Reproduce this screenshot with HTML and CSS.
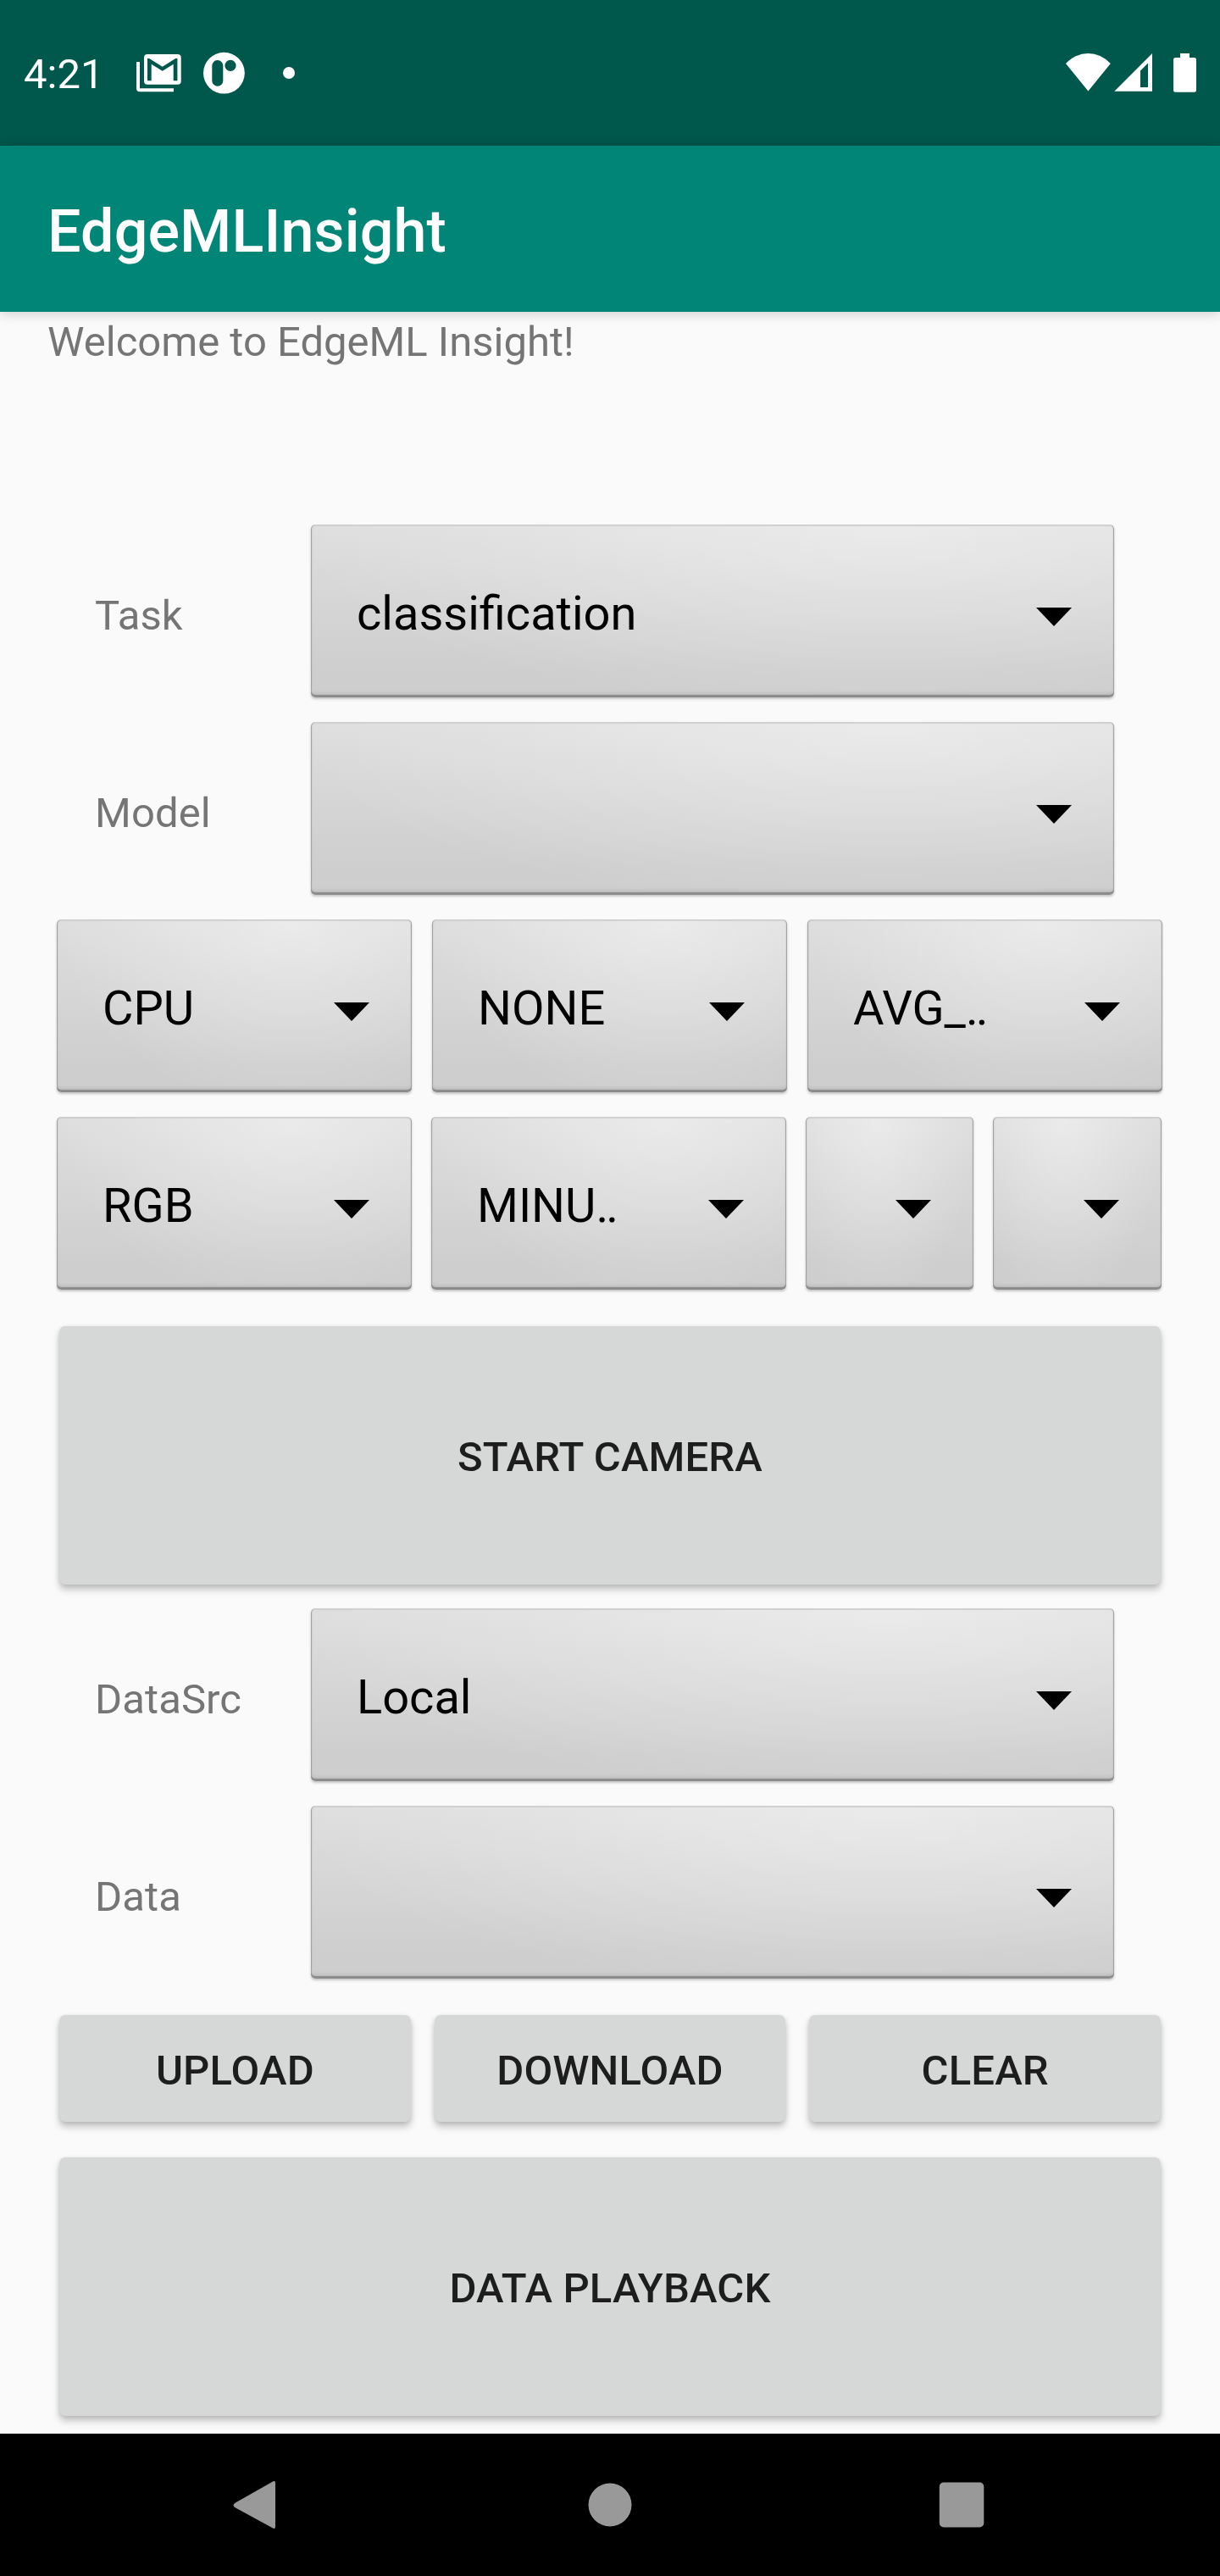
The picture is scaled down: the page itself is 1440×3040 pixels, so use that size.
FILE: index.html
```html
<!DOCTYPE html>
<html lang="en">
<head>
<meta charset="utf-8">
<title>EdgeMLInsight</title>
<link rel="stylesheet" href="styles.css">
</head>
<body>
<div class="screen">
  <header class="status">
    <span class="clock">4:21</span>
    <svg class="notifications" width="200" height="60" viewBox="160 56 200 60" fill="#fff">
      <path d="M161 73h4v31.2h40v4.1h-40q-4 0-4-4z"/>
      <path fill-rule="evenodd" d="M174 64h35.700q4 0 4 4v27.700q0 4-4 4H174q-4 0-4-4V68q0-4 4-4zM174 69v26.300h4.700V75.800l13 8 13-8v19.500h4.700V69h-2.200L191.700 78.700 176.200 69z"/>
      <circle cx="264.400" cy="86.200" r="24.400"/>
      <rect x="250.300" y="71" width="13" height="30.700" rx="6.500" fill="#00574b"/>
      <circle cx="272" cy="77.400" r="6.600" fill="#00574b"/>
      <circle cx="341" cy="86" r="7"/>
    </svg>
    <svg class="indicators" width="160" height="60" viewBox="1255 56 160 60" fill="#fff">
      <path d="M1258 75q11.500-12 26.400-12t26.400 12l-26.400 32.500z"/>
      <path fill-rule="evenodd" d="M1315.300 107.700L1360 63v44.700zM1346 103h9V74.500l-9 9z"/>
      <path d="M1393 63h11v5h5.500q2.500 0 2.500 2.500v35.700q0 2.500-2.500 2.500h-22q-2.500 0-2.500-2.500V70.500q0-2.500 2.500-2.500h5.500z"/>
    </svg>
  </header>
  <div class="appbar"><h1>EdgeMLInsight</h1></div>
  <main>
    <p class="welcome">Welcome to EdgeML Insight!</p>
    <div class="row field">
      <span class="label">Task</span>
      <button class="spinner wide">classification<i class="arrow"></i></button>
    </div>
    <div class="row field">
      <span class="label">Model</span>
      <button class="spinner wide"><i class="arrow"></i></button>
    </div>
    <div class="row thirds">
      <button class="spinner">CPU<i class="arrow"></i></button>
      <button class="spinner">NONE<i class="arrow"></i></button>
      <button class="spinner"><span>AVG_<span class="dots">..</span></span><i class="arrow"></i></button>
    </div>
    <div class="row quarters">
      <button class="spinner">RGB<i class="arrow"></i></button>
      <button class="spinner"><span>MINU<span class="dots">..</span></span><i class="arrow"></i></button>
      <button class="spinner narrow"><i class="arrow"></i></button>
      <button class="spinner narrow"><i class="arrow"></i></button>
    </div>
    <button class="btn large camera">START CAMERA</button>
    <div class="row field">
      <span class="label">DataSrc</span>
      <button class="spinner wide">Local<i class="arrow"></i></button>
    </div>
    <div class="row field">
      <span class="label">Data</span>
      <button class="spinner wide"><i class="arrow"></i></button>
    </div>
    <div class="actions">
      <button class="btn">UPLOAD</button>
      <button class="btn">DOWNLOAD</button>
      <button class="btn">CLEAR</button>
    </div>
    <button class="btn large">DATA PLAYBACK</button>
  </main>
  <nav class="navbar">
    <svg width="60" height="60" viewBox="0 0 60 60"><path d="M3 27.500L47.500 2.300q2.500-1 2.500 2v51.400q0 3-2.500 2L3 33.500q-5-3 0-6z"/></svg>
    <svg width="60" height="60" viewBox="0 0 60 60"><circle cx="30" cy="30" r="25.500"/></svg>
    <svg width="60" height="60" viewBox="0 0 60 60"><rect x="3.800" y="3.500" width="52.500" height="53" rx="5"/></svg>
  </nav>
</div>
</body>
</html>
```
FILE: styles.css
```css
* { box-sizing: border-box; }
body { margin: 0; background: #fafafa; font-family: Roboto, "Liberation Sans", sans-serif; }
button { border: 0; margin: 0; font-family: inherit; }
.screen { display: flex; flex-direction: column; width: 1440px; height: 3040px; }

.status { display: flex; align-items: center; height: 172px; padding: 0 25px 0 28px; background: #00574b; color: #fff; }
.clock { width: 132px; padding-top: 4px; font-size: 49px; line-height: 58px; }
.indicators { margin-left: auto; }

.appbar { position: relative; display: flex; align-items: center; height: 196px; padding: 6px 56px 0; background: #018577; color: #fff; box-shadow: 0 2px 14px rgba(0, 0, 0, .18); }
h1 { margin: 0; font-size: 70px; font-weight: 500; line-height: 82px; letter-spacing: .15px; }

main { flex: 1; display: flex; flex-direction: column; padding: 7px 67px 0; }
.welcome { margin: 0 0 187px -11px; color: #757575; font-size: 49px; line-height: 57px; }
.row { display: grid; height: 204px; margin-bottom: 29px; }
.field { grid-template-columns: 255px 948px; padding-left: 45px; }
.thirds { grid-template-columns: repeat(3, 419px); column-gap: 24px; }
.quarters { grid-template-columns: 419px 419px 198px 199px; column-gap: 23px; margin-bottom: 43px; }
.label { align-self: center; padding-top: 11px; color: #757575; font-size: 49px; line-height: 58px; letter-spacing: .1px; }

.spinner {
  --glow: 66%;
  --spread: 66%;
  display: flex; align-items: center; justify-content: space-between;
  padding: 6px 50px 0 54px;
  color: #000; font-size: 56px; line-height: 66px;
  border-radius: 5px;
  background:
    radial-gradient(ellipse var(--spread) 110% at var(--glow) 0, rgba(255, 255, 255, .4), rgba(255, 255, 255, .2) 50%, rgba(255, 255, 255, 0)),
    linear-gradient(#dedede, #cecece 85%);
  box-shadow: inset 0 -3px 1px #8b8b8b, inset 0 -7px 4px -2px #bcbcbc, inset 2px 0 1px -1px #9d9d9d, inset -2px 0 1px -1px #9d9d9d, inset 0 2px 1px #d0d0d0, 0 2px 3px rgba(0, 0, 0, .22);
}
.wide { --glow: 72%; --spread: 75%; }
.narrow { --glow: 42%; --spread: 60%; }
.arrow { width: 42px; height: 22px; margin-left: auto; margin-top: 8px; background: #000; clip-path: polygon(0 0, 100% 0, 50% 100%); }
.dots { letter-spacing: -2.800px; }

.btn {
  flex: 1; padding: 5px 0 0; color: #1d1d1d; background: #d6d8d7;
  font-size: 49px; font-weight: 500; line-height: 58px; letter-spacing: .15px; border-radius: 7px;
  box-shadow: 0 6px 9px rgba(0, 0, 0, .22), 0 1px 5px rgba(0, 0, 0, .1);
}
.large { flex: none; height: 305px; margin: 0 3px; }
.camera { margin-bottom: 28px; }
.field:has(+ .actions) { margin-bottom: 43px; }
.actions { display: flex; gap: 28px; height: 126px; margin: 0 3px 42px; }

.navbar { position: relative; display: flex; justify-content: space-between; align-items: center; height: 168px; padding: 0 275px; background: #000; fill: #999; }
```
